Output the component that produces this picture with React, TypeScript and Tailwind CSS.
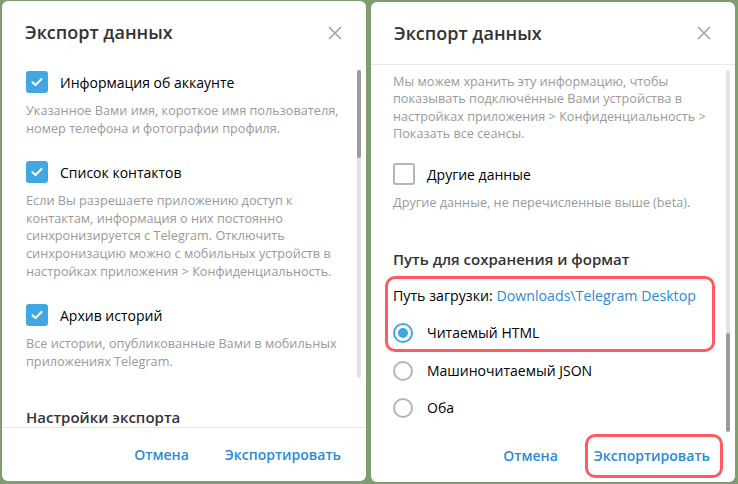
import React from 'react';

const font = { fontFamily: '"Open Sans", "Noto Sans", sans-serif' };

const CloseIcon: React.FC = () => (
  <svg width="14" height="14" viewBox="0 0 14 14" fill="none">
    <path d="M1 1L13 13M13 1L1 13" stroke="#a3a3a3" strokeWidth="1.6" />
  </svg>
);

const Checkbox: React.FC<{ checked?: boolean }> = ({ checked }) =>
  checked ? (
    <div className="flex h-[22px] w-[22px] shrink-0 items-center justify-center rounded-[3px] bg-[#40a7e3]">
      <svg width="12" height="10" viewBox="0 0 12 10" fill="none">
        <path d="M1.5 5.2L4.5 8L10.5 2" stroke="#fff" strokeWidth="2" strokeLinecap="round" strokeLinejoin="round" />
      </svg>
    </div>
  ) : (
    <div className="h-[22px] w-[22px] shrink-0 rounded-[3px] border-2 border-[#b5b5b5] bg-white" />
  );

const Radio: React.FC<{ checked?: boolean }> = ({ checked }) =>
  checked ? (
    <div className="flex h-[20px] w-[20px] shrink-0 items-center justify-center rounded-full border-2 border-[#40a7e3]">
      <div className="h-[10px] w-[10px] rounded-full bg-[#40a7e3]" />
    </div>
  ) : (
    <div className="h-[20px] w-[20px] shrink-0 rounded-full border-2 border-[#b5b5b5]" />
  );

const CheckItem: React.FC<{ checked?: boolean; label: string; text: string; className?: string }> = ({
  checked,
  label,
  text,
  className,
}) => (
  <div className={className}>
    <div className="flex h-[22px] items-center gap-[12px]">
      <Checkbox checked={checked} />
      <span className="text-[14px] text-black">{label}</span>
    </div>
    <p className="mt-[9px] text-[12.7px] leading-[17.6px] text-[#9a9a9a]">{text}</p>
  </div>
);

const RadioItem: React.FC<{ checked?: boolean; label: string }> = ({ checked, label }) => (
  <div className="flex h-[20px] items-center gap-[14px]">
    <Radio checked={checked} />
    <span className="text-[14px] text-black">{label}</span>
  </div>
);

const Header: React.FC<{ divider?: boolean }> = ({ divider }) => (
  <div className={`flex h-[63px] shrink-0 items-center justify-between pl-[23px] pr-[24px] ${divider ? 'border-b border-[#e8e8e8]' : ''}`}>
    <h1 className="text-[18px] font-semibold text-[#333]">Экспорт данных</h1>
    <CloseIcon />
  </div>
);

const Scrollbar: React.FC<{ top: number; height: number; thumbTop: number; thumbHeight: number; right: number }> = ({
  top,
  height,
  thumbTop,
  thumbHeight,
  right,
}) => (
  <div className="absolute w-[4px] rounded-full bg-[#e3e3e3]" style={{ top, height, right }}>
    <div className="absolute left-0 w-[4px] rounded-full bg-[#9c9c9c]" style={{ top: thumbTop, height: thumbHeight }} />
  </div>
);

const Footer: React.FC<{ divider?: boolean; highlight?: boolean }> = ({ divider, highlight }) => (
  <div className={`flex h-[54px] shrink-0 items-center justify-end gap-[36px] pr-[25px] ${divider ? 'border-t border-[#e8e8e8]' : ''}`}>
    <button type="button" className="text-[14px] font-semibold text-[#2a8bd3]">
      Отмена
    </button>
    <button type="button" className="relative text-[14px] font-semibold text-[#2a8bd3]">
      Экспортировать
      {highlight && <span className="absolute -bottom-[12px] -left-[9px] -right-[13px] -top-[11px] rounded-[10px] border-[3px] border-[#ff5a5f]" />}
    </button>
  </div>
);

const App: React.FC = () => {
  return (
    <div className="flex h-[484px] w-[738px] gap-[5px] bg-[#7f9d6e] pl-[2px]" style={font}>
      {/* left dialog */}
      <div className="relative mt-[1px] flex h-[480px] w-[364px] flex-col overflow-hidden rounded-[6px] bg-white">
        <Header />
        <div className="flex-1 overflow-hidden pl-[24px] pr-[18px] pt-[7px]">
          <CheckItem
            checked
            label="Информация об аккаунте"
            text="Указанное Вами имя, короткое имя пользователя, номер телефона и фотографии профиля."
          />
          <CheckItem
            checked
            className="mt-[24px]"
            label="Список контактов"
            text="Если Вы разрешаете приложению доступ к контактам, информация о них постоянно синхронизируется с Telegram. Отключить синхронизацию можно с мобильных устройств в настройках приложения > Конфиденциальность."
          />
          <CheckItem
            checked
            className="mt-[24px]"
            label="Архив историй"
            text="Все истории, опубликованные Вами в мобильных приложениях Telegram."
          />
          <h2 className="mt-[37px] text-[15px] font-semibold leading-[20px] text-[#333]">Настройки экспорта</h2>
        </div>
        <Footer divider />
        <Scrollbar top={69} height={308} thumbTop={0} thumbHeight={88} right={5} />
      </div>

      {/* right dialog */}
      <div className="relative mt-[2px] flex h-[480px] w-[364px] flex-col overflow-hidden rounded-[6px] bg-white">
        <Header divider />
        <div className="flex-1 overflow-hidden pl-[22px] pr-[18px] pt-[8px]">
          <p className="text-[12.7px] leading-[17.3px] text-[#9a9a9a]">
            Мы можем хранить эту информацию, чтобы показывать подключённые Вами устройства в настройках приложения &gt; Конфиденциальность &gt; Показать все сеансы.
          </p>
          <CheckItem
            className="mt-[21px]"
            label="Другие данные"
            text="Другие данные, не перечисленные выше (beta)."
          />
          <h2 className="mt-[37px] text-[15px] font-semibold leading-[20px] text-[#333]">Путь для сохранения и формат</h2>
          <div className="-ml-[8px] mt-[7px] w-[330px] rounded-[10px] border-[3px] border-[#ff5a5f] pb-[6px] pl-[5px] pt-[7px]">
            <div className="h-[20px] text-[14.2px] leading-[20px] text-black">
              Путь загрузки: <span className="text-[#2a8bd3]">Downloads\Telegram Desktop</span>
            </div>
            <div className="mt-[17px]">
              <RadioItem checked label="Читаемый HTML" />
            </div>
          </div>
          <div className="mt-[9px]">
            <RadioItem label="Машиночитаемый JSON" />
          </div>
          <div className="mt-[17px]">
            <RadioItem label="Оба" />
          </div>
        </div>
        <Footer highlight />
        <Scrollbar top={68} height={362} thumbTop={263} thumbHeight={99} right={5} />
      </div>
    </div>
  );
};

export default App;
